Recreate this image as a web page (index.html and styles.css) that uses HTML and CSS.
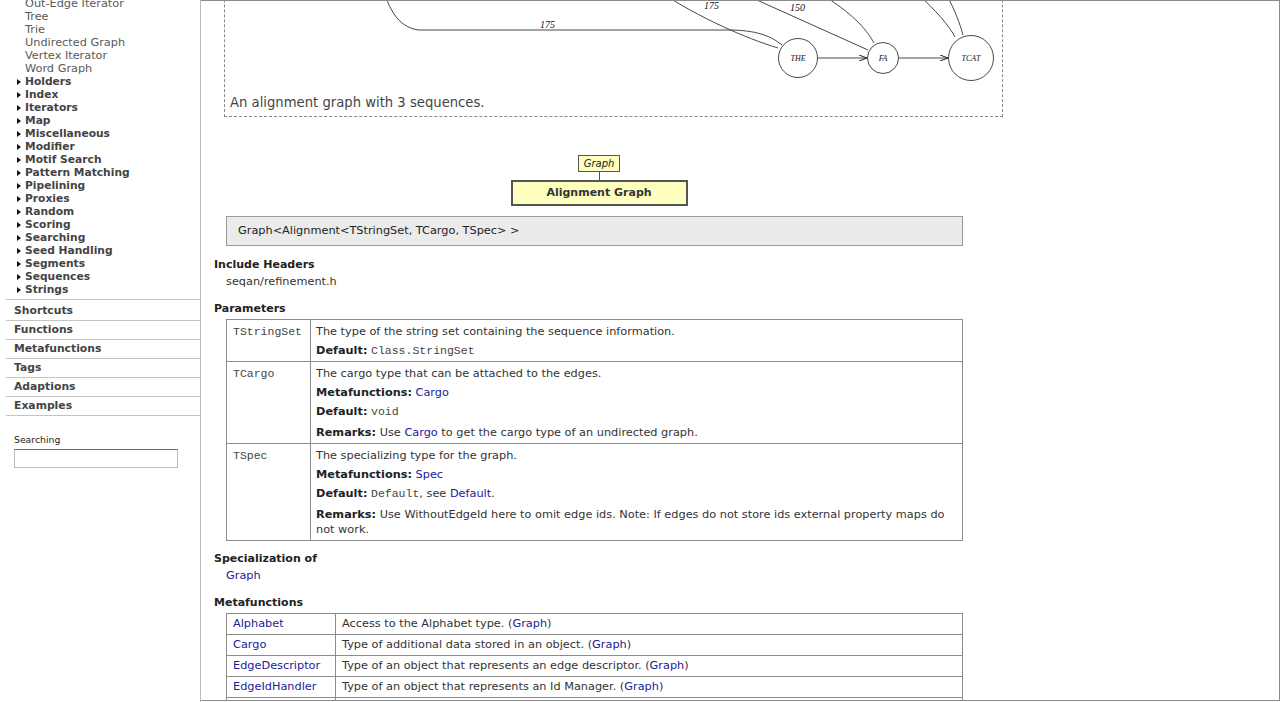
FILE: index.html
```html
<!DOCTYPE html>
<html>
<head>
<meta charset="utf-8">
<title>Alignment Graph</title>
<link rel="stylesheet" href="styles.css">
</head>
<body>
<div class="page">
  <nav class="sidebar">
    <ul class="tree">
      <li class="sub">Out-Edge Iterator</li>
      <li class="sub">Tree</li>
      <li class="sub">Trie</li>
      <li class="sub">Undirected Graph</li>
      <li class="sub">Vertex Iterator</li>
      <li class="sub">Word Graph</li>
      <li class="cat">Holders</li>
      <li class="cat">Index</li>
      <li class="cat">Iterators</li>
      <li class="cat">Map</li>
      <li class="cat">Miscellaneous</li>
      <li class="cat">Modifier</li>
      <li class="cat">Motif Search</li>
      <li class="cat">Pattern Matching</li>
      <li class="cat">Pipelining</li>
      <li class="cat">Proxies</li>
      <li class="cat">Random</li>
      <li class="cat">Scoring</li>
      <li class="cat">Searching</li>
      <li class="cat">Seed Handling</li>
      <li class="cat">Segments</li>
      <li class="cat">Sequences</li>
      <li class="cat">Strings</li>
    </ul>
    <ul class="sections">
      <li class="first">Shortcuts</li>
      <li>Functions</li>
      <li>Metafunctions</li>
      <li>Tags</li>
      <li>Adaptions</li>
      <li>Examples</li>
    </ul>
    <div class="search">
      <div class="search-label">Searching</div>
      <input class="search-input" type="text">
    </div>
  </nav>

  <main class="main">
    <div class="content">
      <div class="figure">
        <svg class="graph" width="767" height="200" viewBox="230 -109 767 200" xmlns="http://www.w3.org/2000/svg">
          <defs>
            <marker id="arr" markerWidth="8" markerHeight="6" refX="8" refY="3" orient="auto" markerUnits="userSpaceOnUse">
              <path d="M0,0 L8,3 L0,6" fill="none" stroke="#222" stroke-width="1"/>
            </marker>
          </defs>
          <g fill="none" stroke="#333" stroke-width="0.9">
            <path d="M382,-12 C390,8 396,26 418,30 L733,30 C760,31 772,37 782,45"/>
            <path d="M660,-8 C700,18 745,38 778,48"/>
            <path d="M748,-4 L868,50"/>
            <path d="M824,-4 C850,12 866,28 874,43"/>
            <path d="M918,-6 C935,10 948,24 955,37"/>
            <path d="M946,-6 C955,10 960,24 963,35"/>
            <line x1="818" y1="58" x2="867" y2="58" marker-end="url(#arr)"/>
            <line x1="899" y1="58" x2="948" y2="58" marker-end="url(#arr)"/>
            <circle cx="798" cy="58" r="19.5"/>
            <circle cx="883" cy="58" r="15.5"/>
            <circle cx="971" cy="58" r="22.5"/>
          </g>
          <g class="glabel">
            <text x="540" y="28">175</text>
            <text x="704" y="9">175</text>
            <text x="790" y="11">150</text>
          </g>
          <g class="nlabel" text-anchor="middle">
            <text x="798" y="61">THE</text>
            <text x="883" y="61">FA</text>
            <text x="971" y="61">TCAT</text>
          </g>
        </svg>
        <div class="caption">An alignment graph with 3 sequences.</div>
      </div>

      <div class="inherit">
        <div class="parent">Graph</div>
        <div class="connector"></div>
        <div class="self">Alignment Graph</div>
      </div>

      <div class="signature">Graph&lt;Alignment&lt;TStringSet, TCargo, TSpec&gt; &gt;</div>

      <section class="sec">
        <h3>Include Headers</h3>
        <div class="sec-body">seqan/refinement.h</div>
      </section>

      <section class="sec">
        <h3>Parameters</h3>
        <table class="params">
          <tr>
            <td class="pname">TStringSet</td>
            <td class="pdesc">
              <p>The type of the string set containing the sequence information.</p>
              <p><b>Default:</b> <code>Class.StringSet</code></p>
            </td>
          </tr>
          <tr>
            <td class="pname">TCargo</td>
            <td class="pdesc">
              <p>The cargo type that can be attached to the edges.</p>
              <p><b>Metafunctions:</b> <a href="#">Cargo</a></p>
              <p><b>Default:</b> <code>void</code></p>
              <p class="remarks"><b>Remarks:</b> Use <a href="#">Cargo</a> to get the cargo type of an undirected graph.</p>
            </td>
          </tr>
          <tr>
            <td class="pname">TSpec</td>
            <td class="pdesc">
              <p>The specializing type for the graph.</p>
              <p><b>Metafunctions:</b> <a href="#">Spec</a></p>
              <p><b>Default:</b> <code>Default</code>, see <a href="#">Default</a>.</p>
              <p class="remarks"><b>Remarks:</b> Use WithoutEdgeId here to omit edge ids. Note: If edges do not store ids external property maps do not work.</p>
            </td>
          </tr>
        </table>
      </section>

      <section class="sec after-table">
        <h3>Specialization of</h3>
        <div class="sec-body"><a href="#">Graph</a></div>
      </section>

      <section class="sec">
        <h3>Metafunctions</h3>
        <table class="mf">
          <tr><td class="mname"><a href="#">Alphabet</a></td><td>Access to the Alphabet type. (<a href="#">Graph</a>)</td></tr>
          <tr><td class="mname"><a href="#">Cargo</a></td><td>Type of additional data stored in an object. (<a href="#">Graph</a>)</td></tr>
          <tr><td class="mname"><a href="#">EdgeDescriptor</a></td><td>Type of an object that represents an edge descriptor. (<a href="#">Graph</a>)</td></tr>
          <tr><td class="mname"><a href="#">EdgeIdHandler</a></td><td>Type of an object that represents an Id Manager. (<a href="#">Graph</a>)</td></tr>
          <tr><td class="mname"><a href="#">EdgeIterator</a></td><td>Edge iterator for a graph. (<a href="#">Graph</a>)</td></tr>
        </table>
      </section>
    </div>
  </main>
</div>
</body>
</html>
```

FILE: styles.css
```css
html, body {
  margin: 0;
  padding: 0;
  height: 100%;
  overflow: hidden;
  background: #fff;
}

body {
  font-family: "DejaVu Sans", Verdana, sans-serif;
  font-size: 11.3px;
  color: #333;
}

.page {
  display: flex;
  height: 702px;
}

/* ---------- sidebar ---------- */
.sidebar {
  width: 200px;
  flex: none;
  border-right: 1px solid #b8b8b8;
  overflow: hidden;
}

.tree {
  list-style: none;
  margin: -3px 0 0 6px;
  padding: 0 0 3px 19px;
  line-height: 13px;
  border-bottom: 1px solid #c4c4c4;
}

.tree .sub {
  color: #5a5a5a;
  font-size: 11.3px;
}

.tree .cat {
  font-weight: bold;
  font-size: 10.7px;
  color: #444;
}

.tree .cat::before {
  content: "";
  display: inline-block;
  width: 0;
  height: 0;
  border-left: 4px solid #111;
  border-top: 3.5px solid transparent;
  border-bottom: 3.5px solid transparent;
  margin-left: -8px;
  margin-right: 4px;
  vertical-align: 0;
}

.sections {
  list-style: none;
  margin: 0 0 0 6px;
  padding: 0;
}

.sections li {
  line-height: 18px;
  padding-left: 8px;
  font-weight: bold;
  font-size: 10.8px;
  color: #444;
  border-bottom: 1px solid #c4c4c4;
}

.sections li.first {
  padding-top: 2px;
}

.search {
  padding: 18px 0 0 14px;
}

.search-label {
  font-size: 9.3px;
  line-height: 12px;
  color: #222;
}

.search-input {
  display: block;
  margin: 3px 0 0;
  width: 164px;
  height: 19px;
  box-sizing: border-box;
  border: 1px solid #bdbdbd;
  border-top-color: #6a6a6a;
  padding: 0;
  background: #fff;
}

/* ---------- main ---------- */
.main {
  flex: 1;
  height: 701px;
  box-sizing: border-box;
  border-top: 1px solid #8a8a8a;
  border-right: 1px solid #8a8a8a;
  border-bottom: 1px solid #8a8a8a;
  overflow: hidden;
}

.content {
  margin-top: -111px;
  padding-left: 13px;
}

a {
  color: #1a1a9c;
  text-decoration: none;
}

.figure {
  margin-left: 10px;
  width: 779px;
  box-sizing: border-box;
  border: 1px dashed #888;
  padding: 0 5px 5px;
}

.graph {
  display: block;
}

.glabel text {
  font-family: "Liberation Serif", "DejaVu Serif", serif;
  font-style: italic;
  font-size: 10px;
  fill: #111;
}

.nlabel text {
  font-family: "Liberation Serif", "DejaVu Serif", serif;
  font-style: italic;
  font-size: 8px;
  fill: #111;
}

.caption {
  margin-top: 4px;
  font-size: 13.2px;
  line-height: 16px;
  color: #444;
}

/* inheritance diagram */
.inherit {
  width: 770px;
  display: flex;
  flex-direction: column;
  align-items: center;
  margin-top: 38px;
}

.parent {
  background: #ffffc0;
  border: 1px solid #555;
  padding: 0 5px;
  font-size: 10px;
  font-style: italic;
  line-height: 15px;
  color: #222;
}

.connector {
  width: 1px;
  height: 8px;
  background: #555;
}

.self {
  width: 173px;
  box-sizing: content-box;
  background: #ffffc0;
  border: 2px solid #555;
  text-align: center;
  font-size: 11px;
  font-weight: bold;
  line-height: 22px;
  color: #333;
}

.signature {
  margin: 10px 0 0 12px;
  width: 737px;
  box-sizing: border-box;
  background: #ebebeb;
  border: 1px solid #999;
  padding: 6px 11px;
  line-height: 16px;
  color: #222;
}

.sec {
  margin-top: 10px;
}

.sec.after-table {
  margin-top: 9px;
}

.sec h3 {
  margin: 0;
  font-size: 11px;
  line-height: 17px;
  font-weight: bold;
  color: #222;
}

.sec-body {
  margin-left: 12px;
  line-height: 17px;
}

table {
  border-collapse: collapse;
  margin: 2px 0 0 12px;
  width: 737px;
  font-size: 11.3px;
}

td {
  border: 1px solid #8c8c8c;
  vertical-align: top;
}

.params .pname {
  width: 71px;
  padding: 4px 6px;
  font-family: "Liberation Mono", "Courier New", monospace;
  font-size: 11.5px;
  line-height: 15px;
  color: #444;
}

.params .pdesc {
  padding: 4px 6px 3px 5px;
}

.params p {
  margin: 0 0 4px;
  line-height: 15px;
}

.params p:last-child {
  margin-bottom: 0;
}

.params p.remarks {
  margin-top: 6px;
}

code {
  font-family: "Liberation Mono", "Courier New", monospace;
  font-size: 11.5px;
  color: #444;
}

.params b {
  color: #222;
}

.mf td {
  padding: 2px 6px;
  line-height: 16px;
}

.mf .mname {
  width: 96px;
}
```
